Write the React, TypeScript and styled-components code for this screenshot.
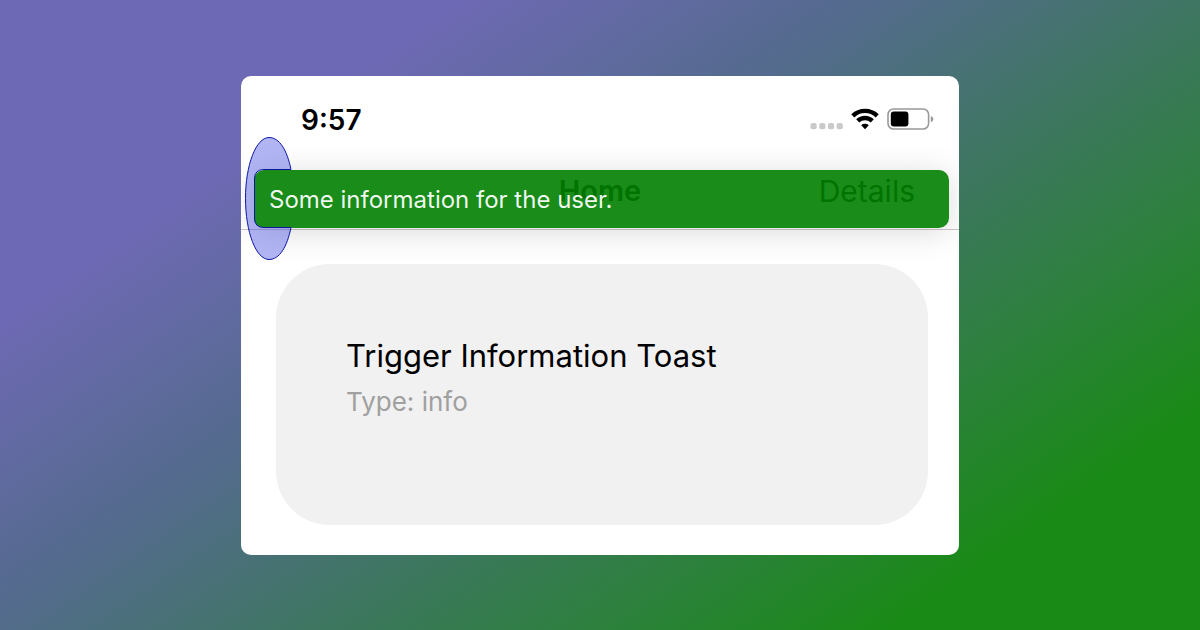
import React from "react";
import styled, { createGlobalStyle } from "styled-components";

const GlobalStyle = createGlobalStyle`
  * { box-sizing: border-box; }
  body { margin: 0; }
  h1 { margin: 0; }
`;

const Page = styled.main`
  min-height: 100vh;
  padding: 76px 24px 75px;
  display: flex;
  justify-content: center;
  align-items: flex-start;
  background: linear-gradient(145deg, #6e69b4 22%, #536b8c 42%, #1a8a17 85%);
  font-family: Inter, "Liberation Sans", sans-serif;
`;

const Screen = styled.section`
  position: relative;
  width: 100%;
  max-width: 718px;
  border-radius: 10px;
  background: #fff;
  overflow: hidden;
`;

const StatusBar = styled.div`
  display: flex;
  align-items: center;
  justify-content: space-between;
  height: 86px;
  padding: 0 25px 0 60px;
`;

const Clock = styled.time`
  padding-top: 2px;
  font-size: 28px;
  line-height: 32px;
  font-weight: 600;
  color: #000;
`;

const StatusIcons = styled.svg`
  display: block;
  width: 126px;
  height: 24px;
`;

const NavBar = styled.header`
  display: grid;
  grid-template-columns: 1fr auto 1fr;
  align-items: center;
  height: 68px;
  padding: 0 44px 10px;
  border-bottom: 1px solid #d0c6cc;
  color: #000;
`;

const NavTitle = styled.h1`
  grid-column: 2;
  font-size: 29px;
  line-height: 36px;
  font-weight: 600;
`;

const NavLink = styled.a`
  justify-self: end;
  font-size: 30px;
  line-height: 36px;
  color: #000;
  text-decoration: none;
`;

const Content = styled.div`
  padding: 34px 31px 30px 35px;
`;

const TriggerCard = styled.button`
  display: block;
  width: 100%;
  min-height: 261px;
  padding: 0 70px 30px;
  border: 0;
  border-radius: 54px;
  background: #f1f1f1;
  font-family: inherit;
  text-align: left;
`;

const CardTitle = styled.span`
  display: block;
  font-size: 31px;
  line-height: 44px;
  color: #000;
`;

const CardType = styled.span`
  display: block;
  font-size: 26px;
  line-height: 48px;
  color: #a0a0a0;
`;

const Toast = styled.div`
  position: absolute;
  top: 94px;
  left: 13px;
  right: 10px;
  height: 58px;
  padding: 2px 15px 0;
  display: flex;
  align-items: center;
  border-radius: 10px;
  background: rgba(0, 128, 0, 0.9);
  box-shadow: 0 4px 32px rgba(0, 0, 0, 0.15);
  color: rgba(255, 255, 255, 0.94);
  font-size: 24px;
  line-height: 32px;
`;

const Highlight = styled.svg`
  position: absolute;
  top: 60px;
  left: 3px;
  width: 50px;
  height: 126px;
`;

export default function App() {
  return (
    <>
      <GlobalStyle />
      <Page>
        <Screen>
          <StatusBar>
            <Clock>9:57</Clock>
            <StatusIcons viewBox="0 0 126 24" aria-hidden="true">
              <g fill="#cacaca">
                <rect x="2.5" y="16" width="6.2" height="6.2" rx="2" />
                <rect x="11.2" y="16" width="6.2" height="6.2" rx="2" />
                <rect x="19.9" y="16" width="6.2" height="6.2" rx="2" />
                <rect x="28.6" y="16" width="6.2" height="6.2" rx="2" />
              </g>
              <g fill="none" stroke="#000" strokeWidth="4.4">
                <path d="M44.8 8.8 A17.6 17.6 0 0 1 69.2 8.8" />
                <path d="M49.7 13.9 A10.6 10.6 0 0 1 64.3 13.9" />
              </g>
              <path d="M57 22.2 L53.2 18.3 A5.6 5.6 0 0 1 60.8 18.3 Z" fill="#000" />
              <rect x="80" y="2" width="40.6" height="20" rx="5.5" fill="#fff" stroke="#999" strokeWidth="1.6" />
              <rect x="82.8" y="4.6" width="17.6" height="15" rx="3" fill="#000" />
              <path d="M122.8 9 Q125.4 10 125.4 12.1 Q125.4 14.3 122.8 15.3 Z" fill="#999" />
            </StatusIcons>
          </StatusBar>
          <NavBar>
            <NavTitle>Home</NavTitle>
            <NavLink href="#details">Details</NavLink>
          </NavBar>
          <Content>
            <TriggerCard type="button">
              <CardTitle>Trigger Information Toast</CardTitle>
              <CardType>Type: info</CardType>
            </TriggerCard>
          </Content>
          <Toast role="status">Some information for the user.</Toast>
          <Highlight viewBox="0 0 50 126" aria-hidden="true">
            <path
              d="M47 33.5 C43 14 35.5 1.5 25 1.5 C12 1.5 1.5 29 1.5 62.5 C1.5 96 12 123.5 25 123.5 C35.5 123.5 43 111 47 91.5 H20 Q10.5 91.5 10.5 82 V43 Q10.5 33.5 20 33.5 Z"
              fill="rgba(60, 70, 225, 0.4)"
              stroke="#0c15a0"
            />
          </Highlight>
        </Screen>
      </Page>
    </>
  );
}
